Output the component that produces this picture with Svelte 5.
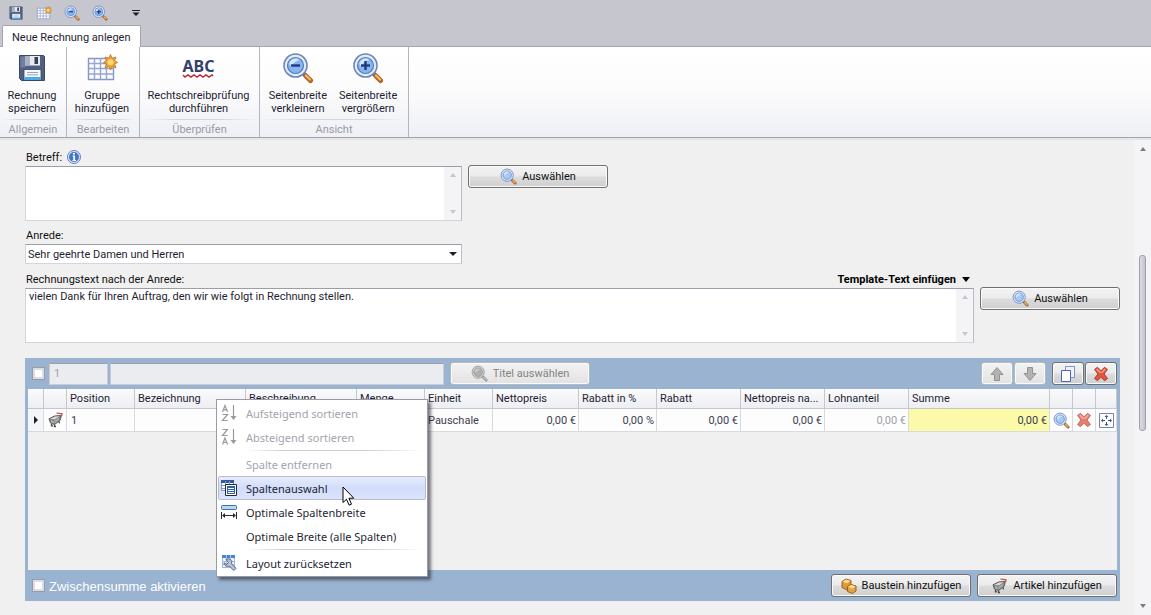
<script>
  let subject = $state('');
  let salutation = $state('Sehr geehrte Damen und Herren');
  let introText = $state('vielen Dank für Ihren Auftrag, den wir wie folgt in Rechnung stellen.');
  let groupNumber = $state('1');
  let groupTitle = $state('');

  const quickActions = [
    { icon: 'disk', label: 'Rechnung speichern' },
    { icon: 'grid', label: 'Gruppe hinzufügen' },
    { icon: 'minus', label: 'Seitenbreite verkleinern' },
    { icon: 'plus', label: 'Seitenbreite vergrößern' }
  ];

  const ribbonGroups = [
    { title: 'Allgemein', size: 'g1', items: [{ icon: 'disk', lines: ['Rechnung', 'speichern'] }] },
    { title: 'Bearbeiten', size: 'g2', items: [{ icon: 'grid', lines: ['Gruppe', 'hinzufügen'] }] },
    { title: 'Überprüfen', size: 'g3', items: [{ icon: 'abc', lines: ['Rechtschreibprüfung', 'durchführen'] }] },
    {
      title: 'Ansicht',
      size: 'g4',
      items: [
        { icon: 'minus', lines: ['Seitenbreite', 'verkleinern'] },
        { icon: 'plus', lines: ['Seitenbreite', 'vergrößern'] }
      ]
    }
  ];

  const columns = [
    { title: '', width: 16 },
    { title: '', width: 23 },
    { title: 'Position', width: 68 },
    { title: 'Bezeichnung', width: 111 },
    { title: 'Beschreibung', width: 111 },
    { title: 'Menge', width: 68 },
    { title: 'Einheit', width: 68 },
    { title: 'Nettopreis', width: 86 },
    { title: 'Rabatt in %', width: 78 },
    { title: 'Rabatt', width: 84 },
    { title: 'Nettopreis na...', width: 84 },
    { title: 'Lohnanteil', width: 84 },
    { title: 'Summe', width: null },
    { title: '', width: 23 },
    { title: '', width: 23 },
    { title: '', width: 21 }
  ];

  const menu = [
    { label: 'Aufsteigend sortieren', icon: 'az', disabled: true },
    { label: 'Absteigend sortieren', icon: 'za', disabled: true },
    { separator: true },
    { label: 'Spalte entfernen', disabled: true },
    { label: 'Spaltenauswahl', icon: 'columns', active: true },
    { label: 'Optimale Spaltenbreite', icon: 'width' },
    { label: 'Optimale Breite (alle Spalten)' },
    { separator: true },
    { label: 'Layout zurücksetzen', icon: 'layout' }
  ];
</script>

{#snippet lens(size, sign, gray)}
  <svg width={size} height={size} viewBox="0 0 32 32" aria-hidden="true">
    <path d="M20.500 20.500l8 8" stroke={gray ? '#8b8b8b' : '#5b6685'} stroke-width="4.500" stroke-linecap="round" />
    <path d="M24 24l4.500 4.500" stroke={gray ? '#9c9c9c' : '#b4682a'} stroke-width="5" stroke-linecap="round" />
    <path d="M24 23.500l4 4" stroke={gray ? '#c4c4c4' : '#f8b862'} stroke-width="2.200" stroke-linecap="round" />
    <circle cx="13.500" cy="13.500" r="11.500" fill={gray ? '#d0d0d0' : '#e2ebf8'} stroke={gray ? '#9a9a9a' : '#6d86b8'} stroke-width="1.600" />
    <circle cx="13.500" cy="13.500" r="8" fill={gray ? '#b0b0b0' : sign ? '#86b6f0' : '#a3c9f6'} stroke={gray ? '#8e8e8e' : '#5479bd'} stroke-width="1.200" />
    <path d="M7.500 10.500a6.500 6.500 0 0 1 10-2.500c-3 .5-7 3-8 7-1.500-1-2.300-2.800-2-4.500z" fill={gray ? '#cbcbcb' : '#d3e7fd'} />
    {#if sign}<path d="M9 13.500h9" stroke="#23397f" stroke-width="2.400" />{/if}
    {#if sign === 'plus'}<path d="M13.500 9v9" stroke="#23397f" stroke-width="2.400" />{/if}
  </svg>
{/snippet}

{#snippet cart()}
  <svg width="16" height="16" viewBox="0 0 16 16" aria-hidden="true">
    <path d="M1 6.800L6.500 4l6-.5-.5 5-5.500 4L2.500 11z" fill="#858585" stroke="#5e5e5e" stroke-linejoin="round" />
    <path d="M2 7l5-2.500 4.500-.3-4.500 3z" fill="#d9d9d9" />
    <path d="M6.500 8.500l5-3.200-.3 2.700-4.500 3.400z" fill="#a9a9a9" />
    <path d="M2.800 8.200l2.700.8.300 2.300-2.300-.8z" fill="#b9b9b9" />
    <path d="M12.300 8l1.200-5" stroke="#6a6a6a" />
    <path d="M3.500 12v1.800h1.500M6.500 12.500v2h1.500M11 9.500l.5 1.800" stroke="#4a4a4a" stroke-width="1.300" />
    <path d="M8.500 1l5.500.8-.3 2.200" stroke="#c9444c" stroke-width="1.200" />
  </svg>
{/snippet}

{#snippet cross(soft)}
  <svg width="16" height="16" viewBox="0 0 16 16" aria-hidden="true">
    <path
      d="M1.500 3.500l3-2.200L8 4.800l3.500-3.500 3 2.200L11 8l3.500 4.500-3 2.200L8 11.200l-3.500 3.500-3-2.200L5 8z"
      fill={soft ? '#e47c70' : '#e0553f'}
      stroke={soft ? '#cc6a60' : '#b0392b'}
      stroke-linejoin="round"
    />
    <path d="M3 3.600l1.400-1L8 6.200l3.600-3.600 1.400 1L9.500 7h-3z" fill={soft ? '#f3aaa0' : '#f39a88'} />
  </svg>
{/snippet}

{#snippet icon(name, size)}
  {#if name === 'disk'}
    <svg width={size} height={size} viewBox="0 0 32 32" aria-hidden="true">
      <path d="M3.500 3.500h24l1 1v24h-23l-2-2z" fill="#4f6083" stroke="#3b4866" />
      <path d="M4.500 4.500h5v11h-5z" fill="#6e7f9f" />
      <path d="M9 4h15v9.500H9z" fill="#e8ecf2" />
      <path d="M9 4h5v9.500H9z" fill="#a9b3c4" />
      <path d="M18.500 5h3.500v7h-3.500z" fill="#354058" />
      <path d="M8 17.500h17V28H8z" fill="#f7f9fc" stroke="#38445f" stroke-width=".8" />
      <path d="M8.500 25h16v3h-16z" fill="#4ea9e8" />
      <path d="M11 20.500h11M11 22.800h11" stroke="#8fa5c9" />
    </svg>
  {:else if name === 'grid'}
    <svg width={size} height={size} viewBox="0 0 32 32" aria-hidden="true">
      <path d="M2.500 6.500h25v21h-25z" fill="#fbfcff" stroke="#8795c4" stroke-width="1.400" />
      <path d="M2.500 11.500h25M2.500 16.500h25M2.500 22h25M8.500 6.500v21M14.500 6.500v21M20.500 6.500v21" stroke="#97a5d0" stroke-width="1.400" />
      <path d="M24.500 2.500l1.700 3.800L30 5l-1.400 3.600 3 1.900-3 1.600 1.400 3.700-3.800-1.300-1.700 3.500-1.700-3.500-3.800 1.300 1.400-3.700-3-1.600 3-1.900L19 5l3.800 1.300z" fill="#eda338" stroke="#bb731c" stroke-width=".8" />
      <circle cx="24.500" cy="10.300" r="3" fill="#ffd476" />
    </svg>
  {:else if name === 'abc'}
    <span class="abc">
      <span>ABC</span>
      <svg width="32" height="4" viewBox="0 0 32 4" aria-hidden="true"><path d="M1 1l2 2 3-2 3 2 3-2 3 2 3-2 3 2 3-2 3 2 3-2 1 1" stroke="#b62a36" stroke-width="1.500" /></svg>
    </span>
  {:else}
    {@render lens(size, name, false)}
  {/if}
{/snippet}

{#snippet menuIcon(name)}
  <svg width="16" height="18" viewBox="0 0 16 18" aria-hidden="true">
    {#if name === 'az' || name === 'za'}
      <g stroke="#9a9a9a" stroke-width="1.200">
        {#if name === 'az'}
          <path d="M1.500 8l2.500-6.500L6.500 8M2.500 5.800h3M1.500 10.500h5l-5 6h5.200" />
        {:else}
          <path d="M1.500 1.500h5l-5 6h5.200M1.500 16.500L4 10l2.500 6.500M2.500 14.500h3" />
        {/if}
        <path d="M12.500 1v14" />
      </g>
      <path d="M9.500 12h6l-3 4z" fill="#9a9a9a" />
    {:else if name === 'columns'}
      <path d="M.5 1.500h12v10H.5z" fill="#fff" stroke="#8298c0" />
      <path d="M0 1h13v3H0z" fill="#2f5c9f" />
      <path d="M4.500 2v10M8.500 2v10M0 6.500h13M0 9.500h13" stroke="#8298c0" />
      <path d="M4.500 5.500h11v11h-11z" fill="#fff" stroke="#252a34" />
      <path d="M6 7h8v2H6zM6 10h8v1H6zM6 12h8v1H6zM6 14h8v1H6z" fill="#2e62ad" />
      <path d="M6.500 7.500v7M13.500 7.500v7" stroke="#2e62ad" />
    {:else if name === 'width'}
      <rect x=".5" y="2.500" width="15" height="4" rx="1" fill="#b9d8ef" stroke="#3f6eb0" />
      <path d="M.5 9v7M15.500 9v7M2 12.500h12" stroke="#2b2b2b" />
      <path d="M1 12.500l3-2.500v5zM15 12.500l-3-2.500v5z" fill="#2b2b2b" />
    {:else}
      <path d="M1.500 1.500h12v12h-12z" fill="#eaf2ff" stroke="#9fb4d8" />
      <path d="M1 1h13v3H1z" fill="#4a86d0" />
      <path d="M5.500 1v13M9.500 1v13M1 7.500h13M1 10.500h13" stroke="#a8bbdc" />
      <path d="M5 5.500a3.600 3.600 0 0 1 5.500 4.300l4.500 4.500-2.200 2.200-4.500-4.500C5.500 13 3 11.500 3 8.800l2.500 1.700L7.500 8.500z" fill="#b7c4d8" stroke="#55668a" stroke-linejoin="round" />
    {/if}
  </svg>
{/snippet}

{#snippet scrollStrip()}
  <span class="strip" aria-hidden="true"><i class="tri up"></i><i class="tri down"></i></span>
{/snippet}

<div class="app">
  <header>
    <div class="quick">
      {#each quickActions as action}
        <button class="bare" aria-label={action.label}>{@render icon(action.icon, 16)}</button>
      {/each}
      <button class="bare more" aria-label="Symbolleiste anpassen">
        <svg width="8" height="6" viewBox="0 0 8 6" aria-hidden="true"><path d="M0 0h8v1H0zM.5 2.500h7L4 6z" fill="#1e1e2a" /></svg>
      </button>
    </div>
    <button class="tab">Neue Rechnung anlegen</button>
    <div class="ribbon">
      {#each ribbonGroups as group}
        <section class="group {group.size}">
          <div class="tools">
            {#each group.items as item}
              <button class="bare tool">
                <span class="art">{@render icon(item.icon, 32)}</span>
                <span>{item.lines[0]}<br />{item.lines[1]}</span>
              </button>
            {/each}
          </div>
          <h2>{group.title}</h2>
        </section>
      {/each}
    </div>
  </header>

  <div class="body">
    <main>
      <div class="label-row first">
        <label for="subject">Betreff:</label>
        <svg width="14" height="14" viewBox="0 0 14 14" aria-hidden="true">
          <circle cx="7" cy="7" r="6.500" fill="#dce6f5" stroke="#6480b8" />
          <circle cx="7" cy="7" r="5" fill="#4479ca" />
          <path d="M6 3h2v1.500H6zM5.500 5.500H8V10h1v1H5.500v-1h.8V6.500h-.8z" fill="#fff" />
        </svg>
      </div>
      <div class="field-row">
        <div class="area short"><textarea id="subject" bind:value={subject}></textarea>{@render scrollStrip()}</div>
        <button class="btn wide">{@render lens(17, '', false)}<span>Auswählen</span></button>
      </div>

      <div class="label-row second"><label for="salutation">Anrede:</label></div>
      <div class="select">
        <select id="salutation" bind:value={salutation}>
          <option>Sehr geehrte Damen und Herren</option>
        </select>
        <i class="tri dark" aria-hidden="true"></i>
      </div>

      <div class="label-row third">
        <label for="intro">Rechnungstext nach der Anrede:</label>
        <button class="bare template">Template-Text einfügen <i class="tri big" aria-hidden="true"></i></button>
      </div>
      <div class="field-row">
        <div class="area"><textarea id="intro" bind:value={introText}></textarea>{@render scrollStrip()}</div>
        <button class="btn wide">{@render lens(17, '', false)}<span>Auswählen</span></button>
      </div>

      <section class="panel">
        <div class="panel-head">
          <input type="checkbox" aria-label="Titel auswählen" />
          <input class="num" type="text" aria-label="Titelnummer" bind:value={groupNumber} disabled />
          <input class="title" type="text" aria-label="Titel" bind:value={groupTitle} disabled />
          <button class="btn wide" disabled>{@render lens(17, '', true)}<span>Titel auswählen</span></button>
          <div class="actions">
            <button class="btn small" disabled aria-label="Nach oben">
              <svg width="14" height="16" viewBox="0 0 14 16" aria-hidden="true"><path d="M7 1.500L13 8.500H9.500v6h-5v-6H1z" fill="#b3b3b3" stroke="#929292" /></svg>
            </button>
            <button class="btn small" disabled aria-label="Nach unten">
              <svg width="14" height="16" viewBox="0 0 14 16" aria-hidden="true"><path d="M7 14.500L13 7.500H9.500v-6h-5v6H1z" fill="#b3b3b3" stroke="#929292" /></svg>
            </button>
            <button class="btn small copy" aria-label="Kopieren">
              <svg width="16" height="16" viewBox="0 0 16 16" aria-hidden="true"><path d="M5.500.5h9v11h-9z" fill="#eef3ff" stroke="#7d92cc" /><path d="M1.500 4.500h9v11h-9z" fill="#fff" stroke="#4a64b4" /></svg>
            </button>
            <button class="btn small" aria-label="Löschen">{@render cross(false)}</button>
          </div>
        </div>

        <div class="sheet">
          <table>
            <colgroup>
              {#each columns as column}
                <col style:width={column.width ? `${column.width}px` : 'auto'} />
              {/each}
            </colgroup>
            <thead>
              <tr>{#each columns as column}<th>{column.title}</th>{/each}</tr>
            </thead>
            <tbody>
              <tr>
                <td class="mark"><i class="tri right" aria-hidden="true"></i></td>
                <td class="pic cart">{@render cart()}</td>
                <td>1</td>
                <td></td>
                <td></td>
                <td></td>
                <td class="unit">Pauschale</td>
                <td class="n">0,00 €</td>
                <td class="n">0,00 %</td>
                <td class="n">0,00 €</td>
                <td class="n">0,00 €</td>
                <td class="n dim">0,00 €</td>
                <td class="n sum">0,00 €</td>
                <td class="pic"><button class="bare" aria-label="Anzeigen">{@render lens(17, '', false)}</button></td>
                <td class="pic"><button class="bare" aria-label="Zeile löschen">{@render cross(true)}</button></td>
                <td class="pic">
                  <button class="bare" aria-label="Verschieben">
                    <svg width="15" height="15" viewBox="0 0 15 15" aria-hidden="true">
                      <path d="M.5.5h14v14H.5z" fill="#fdfdff" stroke="#7484b0" />
                      <path d="M7.500 3v3M7.500 9v3M3 7.500h3M9 7.500h3" stroke="#44557f" />
                      <path d="M7.500 2l2 2h-4zM7.500 13l2-2h-4zM2 7.500l2-2v4zM13 7.500l-2-2v4z" fill="#44557f" />
                    </svg>
                  </button>
                </td>
              </tr>
            </tbody>
          </table>
        </div>

        <div class="panel-foot">
          <input id="subtotal" type="checkbox" />
          <label for="subtotal">Zwischensumme aktivieren</label>
          <button class="btn wide">
            <svg width="16" height="16" viewBox="0 0 16 16" aria-hidden="true">
              <path d="M1 3.500L5 1l5 1.500v6L6 12 1 9.500z" fill="#dd9838" stroke="#98601a" />
              <path d="M1.500 3.800L5 1.600l4.500 1.200L6 5.500z" fill="#ffdc8c" />
              <path d="M6.500 8.500L10 6.500l5 1.500v5l-3.500 2.500-5-2z" fill="#e4a344" stroke="#98601a" />
              <path d="M7 8.800L10 7l4.500 1.300L11.500 10.500z" fill="#ffe09a" />
            </svg>
            <span>Baustein hinzufügen</span>
          </button>
          <button class="btn wide">{@render cart()}<span>Artikel hinzufügen</span></button>
        </div>

        <div class="menu" role="menu">
          {#each menu as entry}
            {#if entry.separator}
              <hr />
            {:else}
              <button class="bare entry" class:active={entry.active} role="menuitem" disabled={entry.disabled}>
                <span class="slot">{#if entry.icon}{@render menuIcon(entry.icon)}{/if}</span>
                {entry.label}
                {#if entry.active}
                  <svg class="pointer" width="13" height="21" viewBox="0 0 13 21" aria-hidden="true"><path d="M1 1v15.500l3.500-3.300 2.600 6 2.400-1-2.600-6h4.900z" fill="#fff" stroke="#000" /></svg>
                {/if}
              </button>
            {/if}
          {/each}
        </div>
      </section>
    </main>
    <div class="scroll" aria-hidden="true">
      <i class="tri up"></i>
      <span class="thumb"></span>
      <i class="tri down"></i>
    </div>
  </div>
</div>

<style>
  :global(body) {
    background: #f0f0f0;
  }
  .app {
    display: flex;
    flex-direction: column;
    height: 100vh;
    overflow: hidden;
    font: 11px/13px Roboto, sans-serif;
    color: #1e1e32;
  }
  .app *,
  .app {
    box-sizing: border-box;
  }
  svg {
    display: block;
    flex: none;
    fill: none;
  }
  button,
  input,
  select,
  textarea {
    font: inherit;
    color: inherit;
    margin: 0;
  }
  .bare {
    border: 0;
    padding: 0;
    background: none;
  }

  header {
    background: #c6c6cf;
    flex: none;
  }
  .quick {
    display: flex;
    align-items: center;
    gap: 12px;
    height: 25px;
    padding-left: 8px;
  }
  .more {
    margin-left: 12px;
  }
  .tab {
    display: block;
    height: 22px;
    margin: 0 0 -1px 2px;
    padding: 2px 9px 0;
    position: relative;
    border: 1px solid #a5a5b0;
    border-bottom: 0;
    border-radius: 2px 2px 0 0;
    background: #fff;
  }
  .ribbon {
    display: flex;
    height: 92px;
    border-top: 1px solid #a5a5b0;
    border-bottom: 1px solid #a2a3ac;
    background: linear-gradient(#fff, #fcfcfd 45%, #eff0f4);
  }
  .group {
    display: flex;
    flex-direction: column;
    border-right: 1px solid #b4b5be;
  }
  .g1 {
    width: 67px;
  }
  .g2 {
    width: 73px;
  }
  .g3 {
    width: 120px;
  }
  .g4 {
    width: 149px;
  }
  .tools {
    display: flex;
    justify-content: center;
    gap: 12px;
    flex: 1;
    padding: 5px 2px 0 0;
  }
  .tool {
    display: flex;
    flex-direction: column;
    align-items: center;
    gap: 5px;
  }
  .art {
    display: flex;
    align-items: center;
    height: 32px;
  }
  .abc {
    display: flex;
    flex-direction: column;
    align-items: center;
    font: bold 16px/16px "Noto Sans", sans-serif;
    color: #35406b;
  }
  h2 {
    margin: 0 4px;
    height: 18px;
    border-top: 1px solid;
    border-image: linear-gradient(90deg, transparent, #d5d6dd 30%, #d5d6dd 70%, transparent) 1;
    font-size: 11px;
    font-weight: 400;
    line-height: 20px;
    text-align: center;
    color: #9a9aa6;
  }

  .body {
    display: flex;
    flex: 1;
    min-height: 0;
    border-top: 2px solid #e5e6ea;
  }
  main {
    flex: 1;
    padding: 8px 14px 0 25px;
    color: #111;
  }
  .label-row {
    display: flex;
    align-items: center;
    gap: 5px;
    height: 18px;
    padding-left: 1px;
  }
  .second {
    margin-top: 5px;
  }
  .third {
    margin-top: 6px;
  }
  .template {
    margin: 0 150px 0 auto;
    font-weight: 700;
    display: flex;
    align-items: center;
    gap: 6px;
    color: #000;
  }
  .field-row {
    display: flex;
    align-items: flex-start;
    gap: 6px;
  }
  .field-row .btn {
    margin-top: -1px;
  }
  .area {
    display: flex;
    flex: 1;
    height: 55px;
    border: 1px solid #d4d4dc;
    border-top-color: #9c9cab;
    border-right-color: #bcbcc6;
    background: #fff;
  }
  .short,
  .select {
    flex: none;
    width: 40%;
    max-width: 437px;
  }
  textarea {
    flex: 1;
    min-width: 0;
    padding: 1px 3px;
    border: 0;
    outline: 0;
    resize: none;
    background: none;
    color: #1e1e32;
    overflow: hidden;
  }
  .strip {
    display: flex;
    flex-direction: column;
    align-items: center;
    justify-content: space-between;
    width: 17px;
    padding: 6px 0;
    background: #f4f4f7;
  }
  .tri {
    display: block;
    width: 0;
    height: 0;
    border: 3px solid transparent;
  }
  .up {
    border-top: 0;
    border-bottom: 4px solid #c6c6cc;
  }
  .down {
    border-bottom: 0;
    border-top: 4px solid #c6c6cc;
  }
  .dark {
    border-width: 4px 4px 0;
    border-top-color: #1e1e32;
  }
  .big {
    border-width: 5px 4px 0;
    border-top-color: #000;
  }
  .right {
    border-width: 4px 0 4px 4px;
    border-left-color: #1e1e32;
  }
  .select {
    display: flex;
    align-items: center;
    height: 20px;
    border: 1px solid #d4d4dc;
    border-top-color: #9c9cab;
    border-right-color: #bcbcc6;
    background: #fff;
    padding-right: 4px;
  }
  select {
    flex: 1;
    height: 18px;
    padding: 0 2px;
    border: 0;
    appearance: none;
    background: none;
    color: #1e1e32;
  }

  .btn {
    display: flex;
    align-items: center;
    justify-content: center;
    gap: 5px;
    height: 23px;
    padding: 0;
    border: 1px solid #707070;
    border-radius: 3px;
    background: linear-gradient(#f3f3f3, #ebebeb 48%, #dcdcdc 52%, #cfcfcf);
    box-shadow: inset 0 0 0 1px #fafafa;
    color: #111;
  }
  .btn:disabled {
    border-color: #b2bac2;
    background: linear-gradient(#f3f3f3, #e2e2e2);
    color: #838383;
  }
  .wide {
    flex: none;
    width: 140px;
  }
  .small {
    width: 32px;
  }

  .panel {
    position: relative;
    margin-top: 15px;
    padding: 0 3px;
    background: #99b3d1;
  }
  .panel-head {
    display: flex;
    align-items: center;
    gap: 2px;
    height: 31px;
  }
  input[type='checkbox'] {
    appearance: none;
    flex: none;
    width: 13px;
    height: 13px;
    margin: 0 2px 0 4px;
    border: 1px solid #9a9aa8;
    background: #fff;
    box-shadow: inset 0 0 0 2px #dcdce3;
  }
  .num,
  .title {
    height: 22px;
    padding: 0 4px;
    border: 1px solid #c9ccd4;
    border-top-color: #9c9cab;
    background: #ebecef;
    color: #a0a0a8;
  }
  .num {
    width: 59px;
  }
  .title {
    width: 334px;
    margin-right: 4px;
  }
  .actions {
    display: flex;
    gap: 1px;
    margin-left: auto;
  }
  .copy {
    margin-left: 5px;
  }
  .sheet {
    height: 181px;
    background: #f0f0f0;
  }
  table {
    width: 100%;
    border-collapse: separate;
    border-spacing: 0;
    table-layout: fixed;
    color: #1e1e32;
  }
  th {
    height: 20px;
    padding: 0 3px;
    border: solid #c5c6cf;
    border-width: 0 1px 1px 0;
    background: linear-gradient(#fbfbfc, #edeef2);
    font-weight: 400;
    text-align: left;
    white-space: nowrap;
    overflow: hidden;
  }
  td {
    height: 23px;
    padding: 0 4px;
    border: solid #d9d9e0;
    border-width: 0 1px 1px 0;
    background: #fdfdfd;
    color: #3c3c50;
  }
  .n {
    padding: 0 2px;
    text-align: right;
  }
  .unit {
    padding: 0 3px;
  }
  .dim {
    color: #a0a0a8;
  }
  .sum {
    background: #fafaa8;
  }
  .mark {
    padding: 0 6px;
    background: #f4f5f8;
  }
  .pic {
    padding: 0 3px;
  }
  .pic.cart {
    padding: 0 4px;
  }
  .pic button {
    display: block;
  }
  .panel-foot {
    display: flex;
    align-items: center;
    gap: 6px;
    height: 31px;
  }
  .panel-foot input {
    margin-right: -2px;
  }
  .panel-foot label {
    margin-right: auto;
    font: 13px/16px "Liberation Sans", sans-serif;
    color: #fff;
    padding-top: 2px;
  }

  .menu {
    position: absolute;
    left: 191px;
    top: 41px;
    width: 212px;
    padding: 1px;
    border: 1px solid #9a9aa8;
    background: #fff;
    box-shadow: 3px 3px 3px rgba(40, 40, 50, 0.6);
    font-family: "Noto Sans", sans-serif;
    font-size: 11px;
  }
  .entry {
    display: flex;
    align-items: center;
    position: relative;
    width: 100%;
    height: 24px;
    border: 1px solid transparent;
    border-radius: 2px;
    white-space: nowrap;
    color: #1e1e32;
  }
  .entry:disabled {
    color: #a3a3ad;
  }
  .active {
    border-color: #b9bccb;
    background: linear-gradient(#e8edfd, #d2dcfa 50%, #dce4fc);
  }
  .slot {
    width: 27px;
    padding-left: 2px;
  }
  hr {
    height: 1px;
    margin: 1px 3px 1px 28px;
    border: 0;
    background: linear-gradient(90deg, transparent, #d0d0d8 20%, #d0d0d8 70%, transparent);
  }
  .pointer {
    position: absolute;
    left: 123px;
    top: 9px;
    z-index: 1;
  }

  .scroll {
    display: flex;
    flex-direction: column;
    align-items: center;
    width: 17px;
    padding: 7px 0;
    background: #f4f4f7;
  }
  .scroll .up,
  .scroll .down {
    border-top-color: #7c7c88;
    border-bottom-color: #7c7c88;
  }
  .thumb {
    width: 7px;
    height: 176px;
    margin: 104px 0 auto;
    border: 1px solid #a0a0ac;
    border-radius: 3px;
    background: linear-gradient(90deg, #dcdce3, #c4c4ce);
  }
</style>
